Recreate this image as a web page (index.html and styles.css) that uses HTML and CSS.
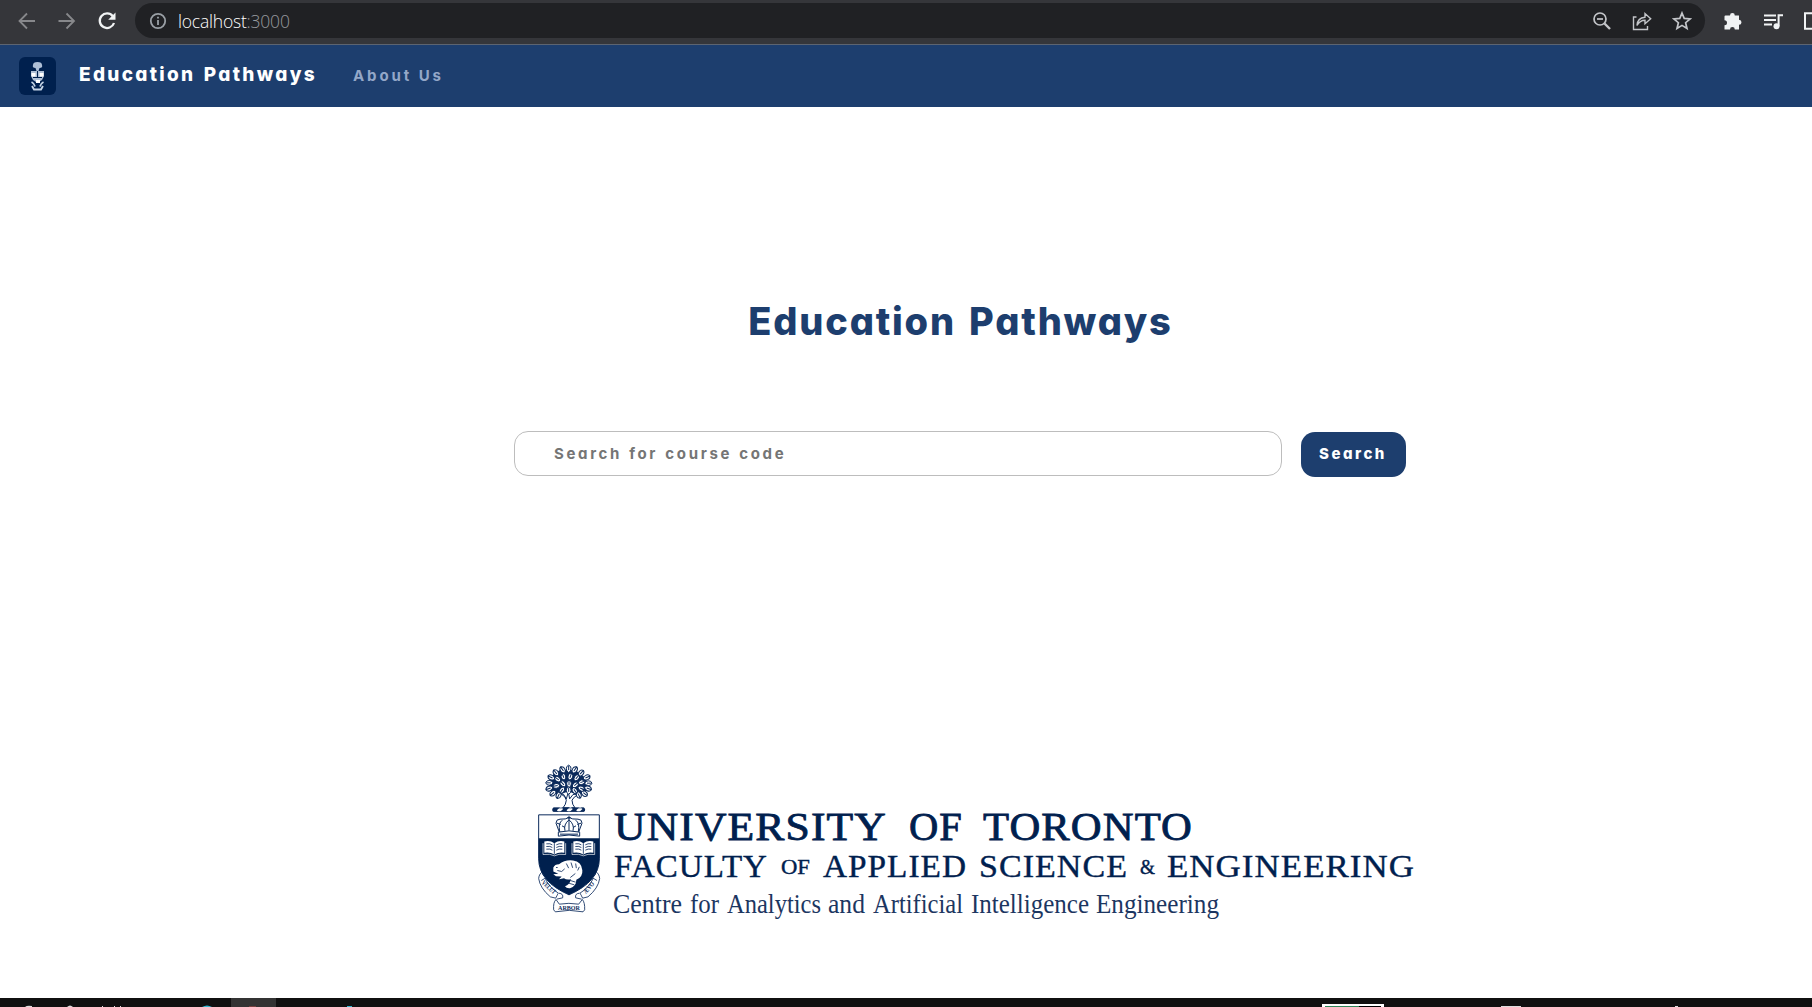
FILE: index.html
```html
<!DOCTYPE html>
<html lang="en">
<head>
<meta charset="utf-8">
<title>Education Pathways</title>
<link rel="stylesheet" href="styles.css">
</head>
<body>
<header class="browser">
  <svg class="nav-icon" viewBox="0 0 20 20"><path class="dim" d="M18 10H3M10 2.5 2.5 10l7.5 7.5"/></svg>
  <svg class="nav-icon" viewBox="0 0 20 20"><path class="dim" d="M1.500 10h15M9.500 2.500 17 10l-7.500 7.500"/></svg>
  <svg class="nav-icon" viewBox="0 0 20 20"><path class="reload" d="M15.800 5.200A7.300 7.300 0 1 0 17 12"/><path fill="#f1f3f4" d="M18.500 1.500v7.300h-7.300z"/></svg>
  <div class="address">
    <svg class="info" viewBox="0 0 18 18"><circle cx="9" cy="9" r="7.200"/><path d="M9 8v5M9 4.800v1.700"/></svg>
    <span class="url">localhost<span class="port">:3000</span></span>
    <div class="actions">
      <svg viewBox="0 0 20 20"><circle cx="8" cy="8" r="6"/><path d="M5 8h6"/><path stroke-width="2.400" d="m12.500 12.500 5.500 5.500"/></svg>
      <svg viewBox="0 0 20 20"><path stroke-width="1.400" d="M4.500 6H1.500v12.500h14V15M5 14.500C5.300 9 8.200 6.500 13 6.200V2.500l5.700 5.300-5.700 5v-3.500c-3.500 0-6 1.500-8 5.200z"/></svg>
      <svg viewBox="0 0 20 20"><path stroke-width="1.700" d="m10 2 2.200 5.400 5.900.5-4.500 3.800 1.400 5.800-5-3.100-5 3.100 1.400-5.800-4.500-3.800 5.900-.5z"/></svg>
    </div>
  </div>
  <div class="extensions">
    <svg viewBox="0 0 20 20"><path fill="#f1f3f4" d="M2.500 4.500H7a2.400 2.400 0 0 1 4.800 0h4.200v4.300a2.500 2.500 0 0 1 0 5v4.700h-4.200a2.400 2.400 0 0 0-4.800 0H1.500v-4.200a2.500 2.500 0 0 0 0-5V5.500a1 1 0 0 1 1-1z"/></svg>
    <svg viewBox="0 0 20 20"><path class="queue" d="M1 4.500h12M1 9h12M1 13.500h8M15.600 15V4.200H20"/><circle cx="13.500" cy="15.300" r="3" fill="#f1f3f4"/></svg>
    <svg viewBox="0 0 20 20"><path class="queue" d="M2 2.200h16v15.600H2z"/></svg>
  </div>
</header>

<nav class="navbar">
  <svg class="badge-logo" viewBox="0 0 37 38">
    <rect width="37" height="38" rx="6" fill="#00204e"/>
    <g fill="#aebfd6"><path d="M14 8q0-3 4.500-3T23 8q1 3-2.500 3l-1 3h-2l-1-3Q13 11 14 8z"/><path d="M12 14h13v5l-2 4-4.500 3-4.500-3-2-4z"/></g>
    <path fill="#fff" d="M12.500 16h4v3.500h-4zM20.500 16h4v3.500h-4zM17 23h4v3h-4z"/>
    <path fill="none" stroke="#c5d4e6" stroke-width="1.800" d="M12.500 25c2 1 3 2.500 3.500 4.500M24.500 25c-2 1-3 2.500-3.500 4.500M13 29l2 3.500h7l2-3.500"/>
    <path stroke="#00204e" stroke-width="1" d="M14 20.500h9M18.500 14v6"/>
  </svg>
  <a class="brand">Education Pathways</a>
  <a class="nav-link">About Us</a>
</nav>

<main class="page">
  <h1 class="title">Education Pathways</h1>
  <form class="search">
    <input class="search-input" type="text" placeholder="Search for course code">
    <button class="search-button" type="button">Search</button>
  </form>
  <div class="institution">
    <svg class="crest" viewBox="45 36 204 458">
      <defs><path id="leaf" d="M-11 0Q-8-8 0-7 8-7 11 0 8 7 0 7-8 8-11 0zM-9 0H4"/></defs>
      <path fill="#fff" stroke="#0b2a5b" stroke-width="3" d="M121 130q17 9 18 20-1 13-10 23h36q-9-10-9-23 3-9 22-19l-19 2-10 13-4-20-6 20-8-13z"/>
      <path fill="#0b2a5b" d="M100 72l22-14 45 2 32 25 4 35-30 15-27-12-34 13-26-18 2-32z"/>
      <g fill="#fff" stroke="#0b2a5b" stroke-width="3">
        <use href="#leaf" transform="translate(146 56) rotate(90)"/><use href="#leaf" transform="translate(128 59) rotate(55)"/><use href="#leaf" transform="translate(164 59) rotate(125)"/>
        <use href="#leaf" transform="translate(108 68) rotate(50)"/><use href="#leaf" transform="translate(183 69) rotate(130)"/><use href="#leaf" transform="translate(94 82) rotate(25)"/>
        <use href="#leaf" transform="translate(200 82) rotate(155)"/><use href="#leaf" transform="translate(88 98)"/><use href="#leaf" transform="translate(205 99) rotate(180)"/>
        <use href="#leaf" transform="translate(88 115) rotate(-20)"/><use href="#leaf" transform="translate(204 115) rotate(200)"/><use href="#leaf" transform="translate(99 129) rotate(-40)"/>
        <use href="#leaf" transform="translate(193 130) rotate(220)"/><use href="#leaf" transform="translate(116 135) rotate(-65)"/><use href="#leaf" transform="translate(176 134) rotate(245)"/>
        <use href="#leaf" transform="translate(113 87) rotate(35)"/><use href="#leaf" transform="translate(130 79) rotate(70)"/><use href="#leaf" transform="translate(151 79) rotate(110)"/>
        <use href="#leaf" transform="translate(170 83) rotate(130)"/><use href="#leaf" transform="translate(185 96) rotate(160)"/><use href="#leaf" transform="translate(109 107) rotate(-10)"/>
        <use href="#leaf" transform="translate(184 115) rotate(205)"/><use href="#leaf" transform="translate(129 101) rotate(45)"/><use href="#leaf" transform="translate(147 101) rotate(90)"/>
        <use href="#leaf" transform="translate(166 104) rotate(140)"/><use href="#leaf" transform="translate(126 120) rotate(-55)"/><use href="#leaf" transform="translate(164 121) rotate(235)"/><use href="#leaf" transform="translate(146 121) rotate(90)"/>
      </g>
      <path fill="#0b2a5b" d="m118 73 9-4-2 10zM158 69l8 3-5 6zM101 94l9 3-7 5zM190 86l5 7-9-2zM136 90l7 3-6 5zM157 91l6 1-4 7zM103 116l9 2-6 6zM191 123l-5-7 9-1zM135 110l5 3-5 6zM155 110l5 5-5 4zM174 106l4-5 3 6z"/>
      <rect x="97" y="172" width="98" height="13" rx="5" fill="#0b2a5b"/>
      <path stroke="#fff" stroke-width="10" d="m114 184 12-11M143 184l12-11M172 184l12-11"/>
      <path fill="none" stroke="#0b2a5b" stroke-width="2" d="M100 173.500h92M100 184h92"/>
      <g fill="#fff" stroke="#0b2a5b" stroke-width="2.500">
        <path d="M71 362q-14 8-15 23 4 29 35 55l16 4 8-15q-27-17-39-43zM224 362q14 8 15 23-4 29-35 55l-16 4-8-15q27-17 39-43z"/>
        <path d="M71 362q-8 10 8 20l-15 9M224 362q8 10-8 20l15 9M116 429q15 1 12 14l-18 4M179 429q-15 1-12 14l18 4"/>
      </g>
      <path fill="#fff" stroke="#0b2a5b" stroke-width="3" d="M56 194h182v132q0 68-91 108-91-40-91-108z"/>
      <path fill="#00204e" d="M56 264h182v62q0 68-91 108-91-40-91-108z"/>
      <g fill="#fff" stroke="#0b2a5b" stroke-width="3">
        <path d="m118 246-10-27q0-12 12-12 18 1 27-5 9 6 27 5 12 0 12 12l-10 27z"/>
        <path d="M119 244q-5-25 8-34M175 244q5-25-8-34M135 242q-5-19 12-33 17 14 12 33M147 203v38M115 246q32-8 64 0v12q-32-7-64 0zM142 202h10M147 197v10M111 219l11 4M183 219l-11 4M126 227l9 5M168 227l-9 5M120 252h54"/>
      </g>
      <path fill="#fff" d="M73 274q17-4 30 5 13-9 30-5v34q-17-3-30 5-13-8-30-5zM160 274q17-4 30 5 13-9 30-5v34q-17-3-30 5-13-8-30-5z"/>
      <path fill="none" stroke="#0b2a5b" stroke-width="2.500" d="M103 279v32M190 279v32M79 281q12-2 18 3M79 289q12-2 18 3M79 297q12-2 18 3M109 284q8-5 18-3M109 292q8-5 18-3M109 300q8-5 18-3M166 281q12-2 18 3M166 289q12-2 18 3M166 297q12-2 18 3M196 284q8-5 18-3M196 292q8-5 18-3M196 300q8-5 18-3"/>
      <path fill="none" stroke="#fff" stroke-width="2" d="M69 279v34q23-3 34 4 11-7 34-4v-34M156 279v34q23-3 34 4 11-7 34-4v-34"/>
      <path fill="#fff" d="M100 352q4-10 17-10 18-14 42-11 26 4 28 29 2 20-18 29 0 20-19 25-11 1-15-6 14-5 18-21-14 3-21-3l-15 3 8-8-17-1-8-6 15-1-15-7z"/>
      <path fill="none" stroke="#0b2a5b" stroke-width="2.500" d="m139 340 7 14M153 337l5 16M167 340l2 14M178 350l-5 11M112 361l13 3 9-8M151 382l15-12M146 399l17 5M151 391l16 5M108 352h5"/>
      <path fill="#fff" stroke="#0b2a5b" stroke-width="2.500" d="M108 448q-9 9-7 31l5 6q42-9 83 0l5-6q1-22-7-31l-11 14q-30-5-58 0z"/>
      <g class="motto"><text x="114" y="480" textLength="66" lengthAdjust="spacingAndGlyphs">ARBOR</text><text transform="translate(64 399) rotate(43)" textLength="50" lengthAdjust="spacingAndGlyphs">VELUT</text><text transform="translate(198 432) rotate(-50)" textLength="40" lengthAdjust="spacingAndGlyphs">ÆVO</text></g>
    </svg>
    <svg class="wordmark" viewBox="610 795 810 130">
      <g class="line-one"><text x="614" y="840" textLength="273" lengthAdjust="spacingAndGlyphs">UNIVERSITY</text><text x="909" y="840" textLength="54" lengthAdjust="spacingAndGlyphs">OF</text><text x="983" y="840" textLength="210" lengthAdjust="spacingAndGlyphs">TORONTO</text></g>
      <g class="line-two"><text x="614" y="876.500" textLength="154" lengthAdjust="spacingAndGlyphs">FACULTY</text><text class="small" x="781" y="874" textLength="29" lengthAdjust="spacingAndGlyphs">OF</text><text x="823" y="876.500" textLength="144" lengthAdjust="spacingAndGlyphs">APPLIED</text><text x="979" y="876.500" textLength="149" lengthAdjust="spacingAndGlyphs">SCIENCE</text><text class="small" x="1140" y="874" textLength="15" lengthAdjust="spacingAndGlyphs">&amp;</text><text x="1167" y="876.500" textLength="248" lengthAdjust="spacingAndGlyphs">ENGINEERING</text></g>
      <g class="line-three"><text x="613" y="912.500" textLength="69" lengthAdjust="spacingAndGlyphs">Centre</text><text x="690" y="912.500" textLength="29" lengthAdjust="spacingAndGlyphs">for</text><text x="727" y="912.500" textLength="94" lengthAdjust="spacingAndGlyphs">Analytics</text><text x="828" y="912.500" textLength="37" lengthAdjust="spacingAndGlyphs">and</text><text x="873" y="912.500" textLength="90" lengthAdjust="spacingAndGlyphs">Artificial</text><text x="971" y="912.500" textLength="118" lengthAdjust="spacingAndGlyphs">Intelligence</text><text x="1096" y="912.500" textLength="123" lengthAdjust="spacingAndGlyphs">Engineering</text></g>
    </svg>
  </div>
</main>

<footer class="taskbar">
  <i class="active-task"></i>
  <svg class="task-icons" viewBox="0 0 1812 9">
    <path fill="#ddd" d="M25 9q2-2 7-1v1zM67 9q3-3 6 0zM102 8h1v1h-1zM114 8h1v1h-1zM120 8h1v1h-1zM1501 8h20v1h-20zM1675 8h3v1h-3z"/>
    <path fill="#35b6cf" d="M202 9q5-3 10 0zM347 8h5v1h-5z"/><path fill="#74413f" d="M249 8h7v1h-7z"/>
    <path fill="#fff" d="M1322 6h62v3h-62z"/><path fill="#30875a" d="M1325 8h34v1h-34z"/><path fill="#000" d="M1359 8h22v1h-22z"/>
  </svg>
</footer>
</body>
</html>
```
FILE: styles.css
```css
* { box-sizing: border-box; }
body {
  margin: 0;
  height: 1007px;
  display: flex;
  flex-direction: column;
  overflow: hidden;
  background: #fff;
  font-family: Inter, "Open Sans", sans-serif;
  font-feature-settings: "cv11", "ss03";
}
svg { display: block; flex: none; }

.browser {
  flex: none;
  height: 45px;
  display: flex;
  align-items: center;
  padding: 0 0 3px 17px;
  background: #35363a;
  border-bottom: 1px solid #5d6470;
}
.nav-icon { width: 20px; height: 20px; margin-right: 20px; fill: none; }
.dim { stroke: #87888b; stroke-width: 1.800; }
.reload { stroke: #f1f3f4; stroke-width: 2.300; }
.address {
  width: 1570px;
  height: 35px;
  flex: none;
  display: flex;
  align-items: center;
  margin-left: -2px;
  padding: 0 13px 0 14px;
  border-radius: 18px;
  background: #202124;
}
.info { width: 18px; height: 18px; fill: none; stroke: #9aa0a6; stroke-width: 1.800; }
.url {
  margin-left: 11px;
  font: 300 17.500px/24px "Open Sans", sans-serif;
  letter-spacing: -0.200px;
  color: #fff;
}
.port { color: #96999d; }
.actions { display: flex; gap: 20px; margin-left: auto; }
.actions svg { width: 20px; height: 20px; fill: none; stroke: #c3c5c9; stroke-width: 1.700; }
.extensions { display: flex; gap: 20px; margin-left: 18px; }
.extensions svg { width: 20px; height: 20px; }
.queue { fill: none; stroke: #f1f3f4; stroke-width: 2; }

.navbar {
  flex: none;
  height: 62px;
  display: flex;
  align-items: center;
  padding-left: 19px;
  background: #1d3e6e;
}
.badge-logo { width: 37px; height: 38px; }
.brand {
  margin: -4px 0 0 23px;
  width: 274px;
  font-size: 19px;
  font-weight: 800;
  letter-spacing: 2.300px;
  word-spacing: 2px;
  color: #fff;
  white-space: nowrap;
}
.nav-link {
  margin-top: -2px;
  font-size: 15px;
  font-weight: 700;
  letter-spacing: 2.900px;
  color: #93a7c8;
}

.page {
  flex: 1;
  min-height: 0;
  display: flex;
  flex-direction: column;
  align-items: center;
  padding: 189px 0 0 109px;
}
.title {
  margin: 0;
  font-size: 38px;
  line-height: 50px;
  font-weight: 800;
  letter-spacing: 1.800px;
  word-spacing: 3px;
  color: #1d3e6e;
  white-space: nowrap;
}
.search {
  display: flex;
  gap: 19px;
  margin: 85px 1px 0 0;
}
.search-input {
  width: 768px;
  height: 45px;
  padding: 0 39px;
  border: 1px solid #bdbdbd;
  border-radius: 14px;
  font: 700 15px Inter, sans-serif;
  font-feature-settings: inherit;
  letter-spacing: 2.650px;
  word-spacing: 1px;
}
.search-input::placeholder { color: #757575; }
.search-button {
  width: 105px;
  height: 45px;
  margin-top: 1px;
  padding: 0 1px 2px 0;
  border: 0;
  border-radius: 14px;
  background: #1d3e6e;
  color: #fff;
  font: 800 15px Inter, sans-serif;
  font-feature-settings: inherit;
  letter-spacing: 2.500px;
}
.institution {
  width: 886px;
  display: flex;
  align-items: flex-start;
  gap: 7px;
  margin-top: 285px;
  margin-left: 35px;
}
.crest { width: 68px; height: 153px; }
.wordmark { width: 810px; height: 130px; margin-top: 33px; fill: #00204e; font-family: "Liberation Serif", serif; }
.line-one { font-size: 39px; letter-spacing: 1px; stroke: #00204e; stroke-width: 0.800; }
.line-two { font-size: 32.500px; letter-spacing: 1px; stroke: #00204e; stroke-width: 0.400; }
.line-two .small { font-size: 21px; letter-spacing: 0; }
.line-three { font-size: 28px; fill: #1c3661; }
.motto { fill: #0b2a5b; font: 700 20px "Liberation Serif", serif; }

.taskbar { flex: none; height: 9px; display: flex; background: #101010; }
.active-task { flex: none; width: 45px; height: 9px; margin-left: 231px; background: #333; }
.task-icons { width: 1812px; height: 9px; margin-left: -276px; }
```
